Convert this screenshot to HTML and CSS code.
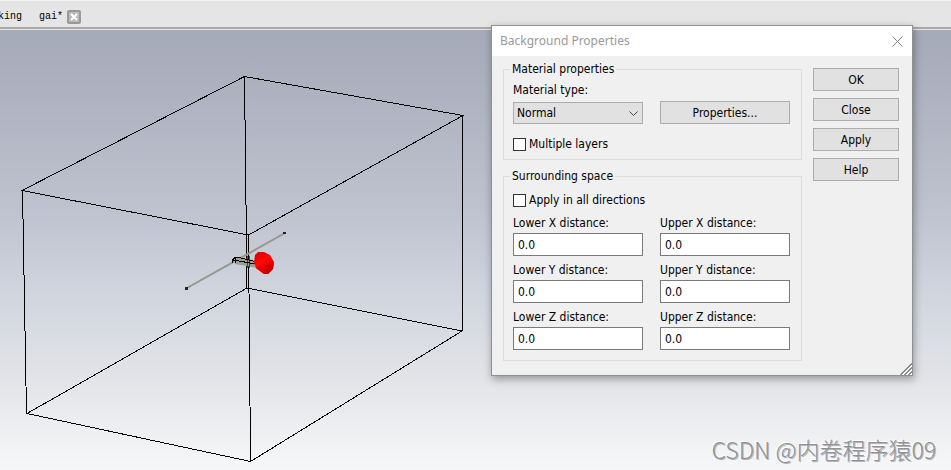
FILE: index.html
```html
<!DOCTYPE html>
<html lang="en">
<head>
<meta charset="utf-8">
<title>Background Properties</title>
<link rel="stylesheet" href="styles.css">
</head>
<body>
<nav class="tabs">
  <a class="tab tab-first" href="#">king</a>
  <a class="tab" href="#">gai*</a>
  <button class="tab-close" type="button" aria-label="Close tab">
    <svg width="14" height="14" viewBox="0 0 14 14"><rect x="1" y="1" width="12" height="12" rx="1" fill="#bababa" stroke="#999" stroke-width="2"/><path d="M4 4l6 6M10 4l-6 6" stroke="#fff" stroke-width="2"/></svg>
  </button>
</nav>
<main class="viewport">
  <svg class="scene" width="470" height="440" viewBox="0 30 470 440" aria-label="3D model">
    <defs>
      <linearGradient id="cone-light" x1="0" y1="0" x2=".6" y2="1">
        <stop offset="0" stop-color="#d80000"/><stop offset=".5" stop-color="#ff0808"/><stop offset="1" stop-color="#d00000"/>
      </linearGradient>
    </defs>
    <g fill="none" stroke="#000" shape-rendering="crispEdges">
      <path d="M244.500 76.500L463 115.500L248.500 235L22 190.500Z"/>
      <path d="M247 288L462 331L250.500 461.500L27 413.500Z"/>
      <path d="M244.500 76.500L247 288M462.500 115.500V331M248.500 235L250.500 461.500M22.500 190.500L26.500 413.500"/>
    </g>
    <path d="M187 288L285 233" stroke="#96968f" stroke-width="2"/>
    <path d="M185 287h3v3h-3zM283 232h3v2h-3z" fill="#222"/>
    <path d="M234 258L240 257L257 261V268L235 264Z" fill="#9d9f93"/>
    <path d="M232.500 263V260L235 257.500H239L257 262M233 260L256 264M235.500 258V263" fill="none" stroke="#000" shape-rendering="crispEdges"/>
    <path d="M247.500 256V268M249.500 256V268" stroke="#000" opacity=".6"/>
    <path d="M258 252L264 252L270 255L274 262L273 269L268 274L264 274L256 268L254 262L255 255Z" fill="url(#cone-light)"/>
    <path d="M256 268L266 265L264 274Z" fill="#e00000"/>
    <path d="M266 265L264 274H268L273 269L274 263Z" fill="#cc0000"/>
  </svg>
  <p class="watermark">CSDN @内卷程序猿09</p>
</main>

<section class="dialog" role="dialog" aria-labelledby="dialog-title">
  <header class="title-bar">
    <h1 id="dialog-title">Background Properties</h1>
    <button class="dialog-close" type="button" aria-label="Close dialog">
      <svg width="11" height="11" viewBox="0 0 11 11"><path d="M.5.5l10 10M10.500.5l-10 10" stroke="#858585"/></svg>
    </button>
  </header>
  <form class="dialog-body">
    <div class="groups">
      <fieldset class="group">
        <legend>Material properties</legend>
        <label class="type-label" for="mtype">Material type:</label>
        <div class="columns type-row">
          <div class="select-wrap">
            <select id="mtype"><option>Normal</option></select>
            <svg class="chevron" width="9" height="6" viewBox="0 0 9 6"><path d="M.5.5l4 4 4-4" fill="none" stroke="#444"/></svg>
          </div>
          <button class="push" type="button">Properties...</button>
        </div>
        <label class="check layers"><input type="checkbox">Multiple layers</label>
      </fieldset>
      <fieldset class="group">
        <legend>Surrounding space</legend>
        <label class="check directions"><input type="checkbox">Apply in all directions</label>
        <div class="columns distances">
          <div class="field"><label for="lx">Lower X distance:</label><input id="lx" type="text" value="0.0"></div>
          <div class="field"><label for="ux">Upper X distance:</label><input id="ux" type="text" value="0.0"></div>
          <div class="field"><label for="ly">Lower Y distance:</label><input id="ly" type="text" value="0.0"></div>
          <div class="field"><label for="uy">Upper Y distance:</label><input id="uy" type="text" value="0.0"></div>
          <div class="field"><label for="lz">Lower Z distance:</label><input id="lz" type="text" value="0.0"></div>
          <div class="field"><label for="uz">Upper Z distance:</label><input id="uz" type="text" value="0.0"></div>
        </div>
      </fieldset>
    </div>
    <div class="actions">
      <button class="push" type="button">OK</button>
      <button class="push" type="button">Close</button>
      <button class="push" type="button">Apply</button>
      <button class="push" type="button">Help</button>
    </div>
  </form>
  <svg class="grip" width="12" height="12" viewBox="0 0 12 12"><path d="M0 12L12 0V12Z" fill="#fff"/><path d="M.5 12L12 .5M4.500 12L12 4.500M8.500 12L12 8.500" stroke="#777" stroke-width="1.3"/></svg>
</section>
</body>
</html>
```
FILE: styles.css
```css
* { box-sizing: border-box; }

body {
  margin: 0;
  min-height: 100vh;
  display: flex;
  flex-direction: column;
  overflow: hidden;
  font: 12px/16px "DejaVu Sans Condensed", "Noto Sans", sans-serif;
  color: #000;
}

button, input, select { font: inherit; color: inherit; margin: 0; }

.tabs {
  display: flex;
  align-items: center;
  height: 30px;
  padding-top: 3px;
  background: #e5e5e5;
  border-top: 1px solid #f2f2f2;
  border-bottom: 1px solid #e8e6e3;
  box-shadow: inset 0 -2px #a9a9a9;
}
.tab {
  margin-right: 17px;
  color: #000;
  text-decoration: none;
  font: 10px/16px "Liberation Mono", monospace;
}
.tab-first { margin-left: -2px; }
.tab-close { display: flex; margin-left: -13px; padding: 0; border: 0; background: none; }

.viewport {
  flex: 1;
  display: flex;
  justify-content: space-between;
  align-items: flex-end;
  background: linear-gradient(#a5aab8, #bec1ce 40%, #d0d5de 60%, #e3e4e8 80%, #f6f7f8);
}
.scene { display: block; align-self: flex-start; flex: none; }
.watermark {
  margin: 0 15px 5px 0;
  font: 300 23px/32px "Noto Sans CJK SC", sans-serif;
  color: #929294;
  text-shadow: 1px 1px #b4b4b6, -1px -1px #fff;
}

.dialog {
  position: absolute;
  left: 491px;
  top: 25px;
  width: 422px;
  background: #f0f0f0;
  border: 1px solid #8f9093;
  box-shadow: 1px 3px 8px rgba(0, 0, 0, .35);
}
.title-bar {
  display: flex;
  justify-content: space-between;
  align-items: center;
  height: 30px;
  padding: 0 9px 0 8px;
  background: #fff;
}
.title-bar h1 { margin: 0; font: 12px/16px "Noto Sans", sans-serif; color: #999; }
.dialog-close { display: flex; padding: 0; border: 0; background: none; }

.dialog-body { display: flex; gap: 11px; padding: 5px 13px 14px 11px; }
.groups { flex: 1; display: flex; flex-direction: column; gap: 8px; }
.group {
  min-width: 0;
  margin: 0;
  padding: 5px 11px 10px 9px;
  border: 1px solid #dcdcdc;
}
.group legend { margin-left: -3px; padding: 0 2px; }
.columns { display: grid; grid-template-columns: 1fr 1fr; column-gap: 17px; }
.type-label { display: block; }
.type-row { margin-top: 3px; }
.select-wrap { position: relative; display: flex; align-items: flex-end; }
select {
  appearance: none;
  width: 100%;
  height: 22px;
  padding: 0 3px;
  border: 1px solid #adadad;
  border-radius: 0;
  background: #e1e1e1;
}
.chevron { position: absolute; right: 5px; bottom: 7px; pointer-events: none; }
.push {
  height: 23px;
  padding: 0;
  border: 1px solid #adadad;
  background: #e1e1e1;
}
.check { display: flex; align-items: center; gap: 3px; }
.check input {
  appearance: none;
  width: 13px;
  height: 13px;
  border: 1px solid #333;
  background: #fff;
}
.layers { margin-top: 12px; margin-bottom: -3px; }
.directions { margin-top: 3px; }
.distances { margin-top: 7px; row-gap: 6px; }
.field { display: flex; flex-direction: column; gap: 2px; }
.field input {
  width: 100%;
  height: 23px;
  padding: 0 4px;
  border: 1px solid #7a7a7a;
  background: #fff;
}
.actions { display: flex; flex-direction: column; gap: 7px; width: 86px; padding-top: 7px; }
.grip { position: absolute; right: 0; bottom: 0; }
```
